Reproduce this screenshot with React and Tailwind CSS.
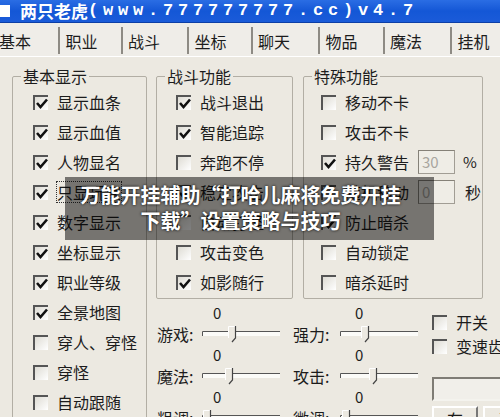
import React from "react";

const tabs = [
  { name: "基本", w: "w-[60px]", first: true },
  { name: "职业", w: "w-[63px]" },
  { name: "战斗", w: "w-[67px]" },
  { name: "坐标", w: "w-[64px]" },
  { name: "聊天", w: "w-[68px]" },
  { name: "物品", w: "w-[65px]" },
  { name: "魔法", w: "w-[68px]" },
  { name: "挂机", w: "w-[50px]" },
];

const basic = [
  ["显示血条", true],
  ["显示血值", true],
  ["人物显名", true],
  ["只显玩家", true, true],
  ["数字显示", true],
  ["坐标显示", true],
  ["职业等级", true],
  ["全景地图", true],
  ["穿人、穿怪", false],
  ["穿怪", false],
  ["自动跟随", false],
];

const fight = [
  ["战斗退出", true],
  ["智能追踪", true],
  ["奔跑不停", false],
  ["稳定攻击", true],
  ["自动打怪", false],
  ["攻击变色", false],
  ["如影随行", true],
];

function Check({ checked }) {
  return (
    <span className="w-[15px] h-[15px] shrink-0 border-t-2 border-l-2 border-[#555] bg-gradient-to-br from-[#dedcd4] to-white flex items-center justify-center">
      {checked && (
        <svg width="12" height="11" viewBox="0 0 12 11">
          <path d="M1 5 L4.5 9 L11 1.5" fill="none" stroke="#111" strokeWidth="2.6" />
        </svg>
      )}
    </span>
  );
}

function Row({ label, checked, focus, children }) {
  return (
    <div className="flex items-center h-[30px]">
      <Check checked={checked} />
      <span
        className={
          focus
            ? "ml-[9px] text-[16px] leading-[20px] outline-1 outline-dotted outline-[#333]"
            : "ml-[9px] text-[16px] leading-[20px]"
        }
      >
        {label}
      </span>
      {children}
    </div>
  );
}

function Group({ title, className, inner, children }) {
  return (
    <fieldset className={"border border-[#b2aea4] rounded-[2px] " + className}>
      <legend className="ml-[8px] px-[2px] text-[16px] leading-[18px]">{title}</legend>
      <div className={inner}>{children}</div>
    </fieldset>
  );
}

function Slider({ t }) {
  return (
    <svg width="78" height="22">
      <rect x="0" y="8" width="78" height="5" fill="#fbfbf8" />
      <path d="M0.5 13 V8.5 H78" stroke="#555" fill="none" />
      <path d={`M${t - 4} 3 H${t + 4} V15 L${t} 19 L${t - 4} 15 Z`} fill="#ece9e1" />
      <path d={`M${t - 3.5} 15 V3.5 H${t + 3}`} stroke="#fff" fill="none" />
      <path d={`M${t + 3.5} 3 V15 L${t} 19`} stroke="#444" fill="none" strokeWidth="1.2" />
    </svg>
  );
}

function SliderUnit({ label, t, wide }) {
  return (
    <div className="h-[42px]">
      <div className={wide ? "h-[16px] leading-[16px] text-[15px] pl-[62px]" : "h-[16px] leading-[16px] text-[15px] pl-[57px]"}>0</div>
      <div className="h-[26px] flex items-center">
        <span className={wide ? "w-[47px] text-[16px]" : "w-[46px] pl-[1px] text-[16px]"}>{label}</span>
        <Slider t={t} />
      </div>
    </div>
  );
}

export default function App() {
  return (
    <div className="relative w-[500px] h-[417px] overflow-hidden bg-[#ece9e1] text-[#1c1c1c] font-['Noto_Sans_CJK_SC','Noto_Sans',sans-serif]">
      {/* title bar */}
      <div className="h-[23px] flex items-center bg-gradient-to-b from-[#2a6de4] via-[#1457d6] to-[#1a5bd9] border-b border-[#0d3fa6]">
        <span className="w-[10px] h-[12px] bg-white mr-[10px]" />
        <span className="text-white font-bold text-[17px] leading-[20px]">两只老虎</span>
        <span className="text-white font-bold text-[17px] leading-[20px] tracking-[4.8px] font-['Liberation_Mono',monospace]">
          (www.777777777.cc)v4.7
        </span>
      </div>

      {/* tabs */}
      <div className="h-[34px] flex items-end pb-[2px] bg-[#efede8] border-b border-white">
        {tabs.map((tab) => (
          <div
            key={tab.name}
            className={
              tab.first
                ? "h-[27px] flex items-center text-[16px] -ml-[1px] " + tab.w
                : "h-[27px] flex items-center text-[16px] border-l-2 border-[#8e8b84] pl-[5px] " + tab.w
            }
          >
            {tab.name}
          </div>
        ))}
      </div>

      {/* content */}
      <div className="flex pl-[12px] pt-[10px]">
        <Group title="基本显示" className="w-[135px] h-[380px] shrink-0" inner="pl-[20px] pt-[2px]">
          {basic.map(([l, c, f]) => (
            <Row key={l} label={l} checked={c} focus={f} />
          ))}
        </Group>

        <div className="ml-[9px] flex flex-col">
          <div className="flex gap-[10px]">
            <Group title="战斗功能" className="w-[137px] h-[232px]" inner="pl-[19px] pt-[2px]">
              {fight.map(([l, c]) => (
                <Row key={l} label={l} checked={c} />
              ))}
            </Group>
            <Group title="特殊功能" className="w-[180px] h-[232px]" inner="pl-[17px] pt-[2px]">
              <Row label="移动不卡" checked={false} />
              <Row label="攻击不卡" checked={false} />
              <Row label="持久警告" checked={true}>
                <span className="ml-[9px] w-[37px] h-[24px] border border-[#a19d94] border-t-[#858178] border-l-[#858178] bg-[#efede6] text-[#a8a59e] text-[15px] leading-[22px] pl-[3px]">
                  30
                </span>
                <span className="ml-[8px] text-[15px]">%</span>
              </Row>
              <Row label="随机移动" checked={false}>
                <span className="ml-[9px] w-[37px] h-[24px] border border-[#a19d94] border-t-[#858178] border-l-[#858178] bg-[#efede6] text-[#a8a59e] text-[15px] leading-[22px] pl-[3px]">
                  0
                </span>
                <span className="ml-[10px] text-[16px]">秒</span>
              </Row>
              <Row label="防止暗杀" checked={true} />
              <Row label="自动锁定" checked={false} />
              <Row label="暗杀延时" checked={false} />
            </Group>
          </div>

          <div className="flex mt-[6px]">
            <div className="w-[137px]">
              <SliderUnit label="游戏:" t={30} />
              <SliderUnit label="魔法:" t={27} />
              <SliderUnit label="粗调:" t={5} />
            </div>
            <div className="w-[139px]">
              <SliderUnit label="强力:" t={25} wide />
              <SliderUnit label="攻击:" t={33} wide />
              <SliderUnit label="微调:" t={6} wide />
            </div>
            <div className="pt-[5px] w-[80px]">
              <div className="flex items-center h-[24px]">
                <Check checked={false} />
                <span className="ml-[9px] text-[16px] whitespace-nowrap">开关</span>
              </div>
              <div className="flex items-center h-[24px]">
                <Check checked={false} />
                <span className="ml-[9px] text-[16px] whitespace-nowrap">变速齿轮</span>
              </div>
              <div className="mt-[19px] h-[24px] w-[90px] border-2 border-[#7f7c75] border-r-[#f4f3ee] border-b-[#f4f3ee] bg-[#f1efea]" />
              <div className="mt-[5px] flex">
                <div className="w-[46px] h-[26px] border-2 border-white border-r-[#777] border-b-[#777] flex items-center justify-center text-[16px] shrink-0">
                  存
                </div>
                <div className="ml-[5px] w-[46px] h-[26px] border-2 border-white border-r-[#777] border-b-[#777] flex items-center justify-center text-[16px] shrink-0">
                  读
                </div>
              </div>
            </div>
          </div>
        </div>
      </div>

      {/* caption overlay */}
      <div className="absolute left-[65px] top-[177px] w-[369px] h-[63px] bg-black/50 pt-[5px] pr-[18px] text-center text-white font-bold text-[20px] leading-[26px] [text-shadow:0_0_3px_#000]">
        万能开挂辅助“打哈儿麻将免费开挂
        <br />
        下载”设置策略与技巧
      </div>
    </div>
  );
}
